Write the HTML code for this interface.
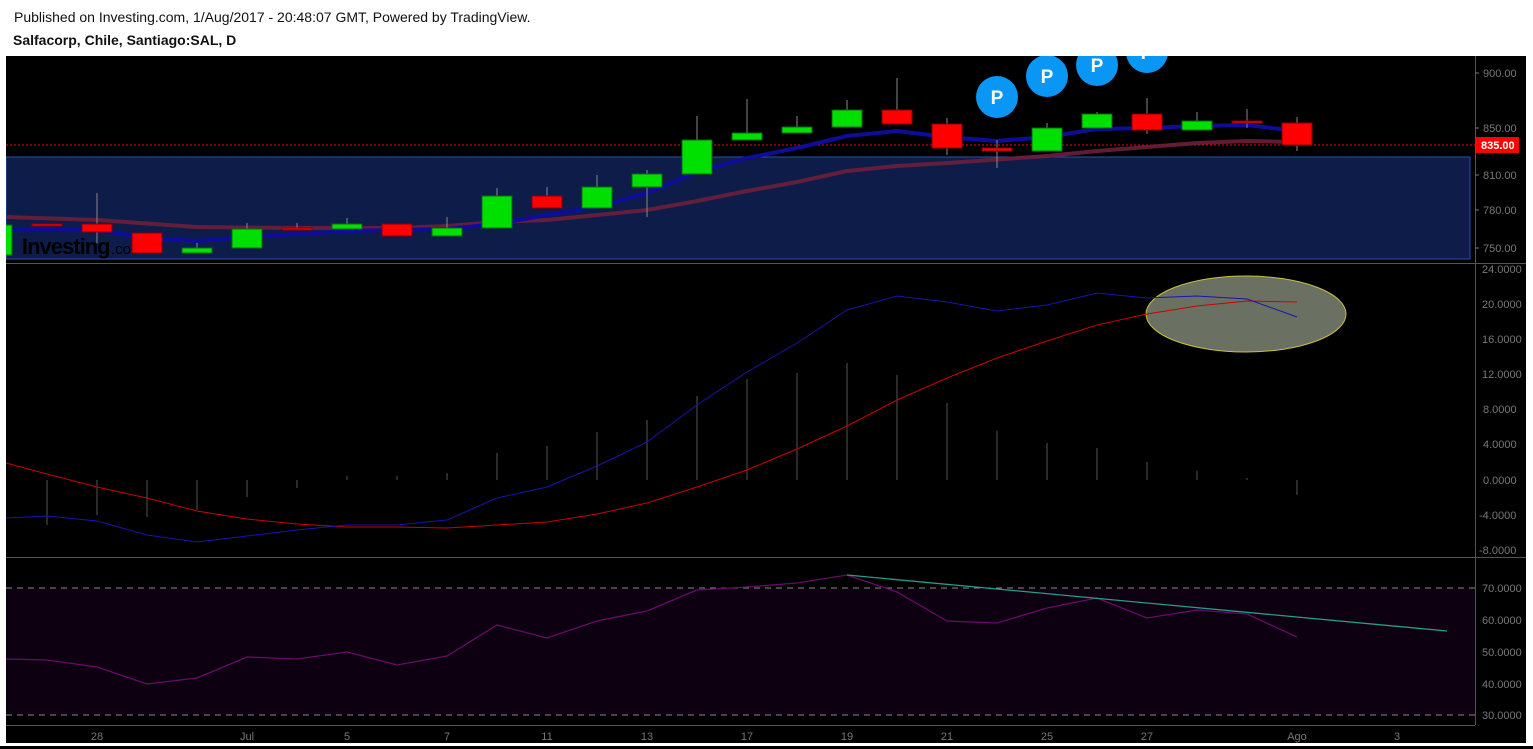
<!DOCTYPE html>
<html><head><style>
html,body{margin:0;padding:0;background:#fff;width:1533px;height:749px;overflow:hidden;font-family:"Liberation Sans",Arial,sans-serif}
.t1{position:absolute;left:14px;top:9px;font-size:14px;color:#111}
.t2{position:absolute;left:13px;top:32px;font-size:14px;font-weight:bold;color:#111}
svg{position:absolute;left:0;top:0}
</style></head><body>
<div class="t1">Published on Investing.com, 1/Aug/2017 - 20:48:07 GMT, Powered by TradingView.</div>
<div class="t2">Salfacorp, Chile, Santiago:SAL, D</div>
<svg width="1533" height="749" viewBox="0 0 1533 749" font-family="Liberation Sans, Arial, sans-serif">
<defs><clipPath id="c1"><rect x="6" y="56" width="1469" height="207"/></clipPath></defs>
<rect x="6" y="56" width="1520" height="687" fill="#000"/>
<rect x="0" y="746" width="1533" height="3" fill="#000"/>
<!-- panel 1 -->
<g clip-path="url(#c1)">
<rect x="6" y="157" width="1464" height="102" fill="#0e1c4a" stroke="#2a4fb0" stroke-width="1"/>
<line x1="6" y1="145" x2="1475" y2="145" stroke="#f00" stroke-dasharray="2,2"/>
<text x="22" y="254" font-size="22" font-weight="bold" fill="#000" letter-spacing="-1">Investing</text><text x="111" y="254" font-size="15" fill="#000">.com</text>
<polyline fill="none" stroke="#6b1f3a" stroke-width="4" opacity="0.9" points="7,217 97,220 197,227 297,228 397,228 447,226 497,222 547,220 647,210 697,201 747,191 797,182 847,171 897,166 947,163 1047,156 1097,151 1147,147 1197,143 1247,141 1297,142"/>
<polyline fill="none" stroke="#0d0d9a" stroke-width="4" points="7,230 47,229 97,230 147,238 197,241 247,237 297,234 347,231 397,230 447,229 497,224 547,215 597,207 647,193 697,172 747,158 797,148 847,136 897,131 947,137 997,141 1047,137 1097,129 1147,128 1197,126 1247,125 1297,131"/>
<g stroke="#888" stroke-width="1">
<line x1="97" y1="193" x2="97" y2="243"/><line x1="197" y1="243" x2="197" y2="250"/><line x1="247" y1="223" x2="247" y2="230"/><line x1="297" y1="223" x2="297" y2="230"/><line x1="347" y1="218" x2="347" y2="225"/><line x1="447" y1="217" x2="447" y2="230"/><line x1="497" y1="188" x2="497" y2="198"/><line x1="547" y1="187" x2="547" y2="198"/><line x1="597" y1="175" x2="597" y2="188"/><line x1="647" y1="170" x2="647" y2="217"/><line x1="697" y1="116" x2="697" y2="142"/><line x1="747" y1="99" x2="747" y2="134"/><line x1="797" y1="116" x2="797" y2="128"/><line x1="847" y1="100" x2="847" y2="112"/><line x1="897" y1="78" x2="897" y2="112"/><line x1="947" y1="118" x2="947" y2="155"/><line x1="997" y1="140" x2="997" y2="168"/><line x1="1047" y1="123" x2="1047" y2="130"/><line x1="1097" y1="112" x2="1097" y2="116"/><line x1="1147" y1="98" x2="1147" y2="134"/><line x1="1197" y1="112" x2="1197" y2="122"/><line x1="1247" y1="109" x2="1247" y2="128"/><line x1="1297" y1="117" x2="1297" y2="151"/>
</g>
<g stroke="#800" stroke-width="1" fill="#f00">
<rect x="32" y="224" width="30" height="2"/><rect x="82" y="224" width="30" height="8"/><rect x="132" y="233" width="30" height="20"/><rect x="282" y="228" width="30" height="2"/><rect x="382" y="224" width="30" height="12"/><rect x="532" y="196" width="30" height="12"/><rect x="882" y="110" width="30" height="14"/><rect x="932" y="124" width="30" height="24"/><rect x="982" y="148" width="30" height="3"/><rect x="1132" y="114" width="30" height="16"/><rect x="1232" y="121" width="30" height="2"/><rect x="1282" y="123" width="30" height="22"/>
</g>
<g stroke="#0a6a0a" stroke-width="1" fill="#00e000">
<rect x="-8" y="225" width="20" height="30"/><rect x="182" y="248" width="30" height="5"/><rect x="232" y="229" width="30" height="19"/><rect x="332" y="224" width="30" height="5"/><rect x="432" y="228" width="30" height="8"/><rect x="482" y="196" width="30" height="32"/><rect x="582" y="187" width="30" height="21"/><rect x="632" y="174" width="30" height="13"/><rect x="682" y="140" width="30" height="34"/><rect x="732" y="133" width="30" height="7"/><rect x="782" y="127" width="30" height="6"/><rect x="832" y="110" width="30" height="17"/><rect x="1032" y="128" width="30" height="23"/><rect x="1082" y="114" width="30" height="14"/><rect x="1182" y="121" width="30" height="9"/>
</g>
<g fill="#0a96f5"><circle cx="997" cy="97" r="21"/><circle cx="1047" cy="76" r="21"/><circle cx="1097" cy="65" r="21"/><circle cx="1147" cy="52" r="21"/></g>
<g fill="#fff" font-size="19" font-weight="bold" text-anchor="middle"><text x="997" y="104">P</text><text x="1047" y="83">P</text><text x="1097" y="72">P</text><text x="1147" y="59">P</text></g>
</g>
<rect x="900" y="44" width="400" height="12" fill="#fff"/>
<!-- separators -->
<line x1="6" y1="263.5" x2="1526" y2="263.5" stroke="#555"/>
<line x1="6" y1="557.5" x2="1526" y2="557.5" stroke="#555"/>
<line x1="6" y1="725.5" x2="1475" y2="725.5" stroke="#555"/>
<line x1="1475.5" y1="56" x2="1475.5" y2="725" stroke="#555"/>
<!-- axis labels -->
<g fill="#777" font-size="11">
<text x="1483" y="77">900.00</text><text x="1483" y="132">850.00</text><text x="1483" y="179">810.00</text><text x="1483" y="214">780.00</text><text x="1483" y="252">750.00</text>
<text x="1482" y="273">24.0000</text><text x="1482" y="308">20.0000</text><text x="1482" y="343">16.0000</text><text x="1482" y="378">12.0000</text><text x="1483" y="413">8.0000</text><text x="1483" y="448">4.0000</text><text x="1483" y="484">0.0000</text><text x="1479" y="519">-4.0000</text><text x="1479" y="554">-8.0000</text>
<text x="1482" y="592">70.0000</text><text x="1482" y="624">60.0000</text><text x="1482" y="656">50.0000</text><text x="1482" y="688">40.0000</text><text x="1482" y="719">30.0000</text>
</g>
<g stroke="#777"><line x1="1475" y1="73" x2="1479" y2="73"/><line x1="1475" y1="128" x2="1479" y2="128"/><line x1="1475" y1="175" x2="1479" y2="175"/><line x1="1475" y1="210" x2="1479" y2="210"/><line x1="1475" y1="248" x2="1479" y2="248"/></g>
<rect x="1476" y="137" width="43" height="16" fill="#f00"/>
<text x="1481" y="149" fill="#fff" font-size="11" font-weight="bold">835.00</text>
<!-- panel 2 -->
<g stroke="#555" stroke-width="1">
<line x1="47" y1="480" x2="47" y2="525"/><line x1="97" y1="480" x2="97" y2="515"/><line x1="147" y1="480" x2="147" y2="517"/><line x1="197" y1="480" x2="197" y2="510"/><line x1="247" y1="480" x2="247" y2="497"/><line x1="297" y1="480" x2="297" y2="488"/><line x1="347" y1="480" x2="347" y2="476"/><line x1="397" y1="480" x2="397" y2="476"/><line x1="447" y1="480" x2="447" y2="473"/><line x1="497" y1="480" x2="497" y2="453"/><line x1="547" y1="480" x2="547" y2="446"/><line x1="597" y1="480" x2="597" y2="432"/><line x1="647" y1="480" x2="647" y2="420"/><line x1="697" y1="480" x2="697" y2="396"/><line x1="747" y1="480" x2="747" y2="379"/><line x1="797" y1="480" x2="797" y2="373"/><line x1="847" y1="480" x2="847" y2="363"/><line x1="897" y1="480" x2="897" y2="375"/><line x1="947" y1="480" x2="947" y2="403"/><line x1="997" y1="480" x2="997" y2="431"/><line x1="1047" y1="480" x2="1047" y2="443"/><line x1="1097" y1="480" x2="1097" y2="448"/><line x1="1147" y1="480" x2="1147" y2="462"/><line x1="1197" y1="480" x2="1197" y2="471"/><line x1="1247" y1="480" x2="1247" y2="478"/><line x1="1297" y1="480" x2="1297" y2="495"/>
</g>
<ellipse cx="1246" cy="314" rx="100" ry="38" fill="#6b7162" stroke="#c8c040" stroke-width="1"/>
<polyline fill="none" stroke="#c00" stroke-width="1" points="6,463 47,474 97,487 147,498 197,511 247,519 297,524 347,527 397,527 447,528 497,525 547,522 597,514 647,503 697,487 747,470 797,449 847,426 897,400 947,378 997,358 1047,341 1097,325 1147,314 1197,306 1247,301 1297,302"/>
<polyline fill="none" stroke="#1515b0" stroke-width="1" points="6,518 47,516 97,521 147,535 197,542 247,536 297,530 347,525 397,525 447,520 497,498 547,487 597,466 647,442 697,405 747,372 797,343 847,310 897,296 947,302 997,311 1047,305 1097,293 1147,298 1197,296 1247,299 1297,317"/>
<!-- panel 3 -->
<rect x="6" y="588" width="1469" height="127" fill="#0d0010"/>
<line x1="6" y1="588" x2="1475" y2="588" stroke="#888" stroke-dasharray="6,5"/>
<line x1="6" y1="715" x2="1475" y2="715" stroke="#888" stroke-dasharray="6,5"/>
<polyline fill="none" stroke="#6a0a6a" stroke-width="1.3" points="6,659 47,660 97,667 147,684 197,678 247,657 297,659 347,652 397,665 447,656 497,625 547,638 597,621 647,611 697,590 747,587 797,583 847,575 897,592 947,621 997,623 1047,608 1097,598 1147,618 1197,610 1247,614 1297,637"/>
<line x1="847" y1="575" x2="1447" y2="631" stroke="#2a9a8a" stroke-width="1.3"/>
<!-- time axis -->
<g fill="#777" font-size="11" text-anchor="middle">
<text x="97" y="740">28</text><text x="247" y="740">Jul</text><text x="347" y="740">5</text><text x="447" y="740">7</text><text x="547" y="740">11</text><text x="647" y="740">13</text><text x="747" y="740">17</text><text x="847" y="740">19</text><text x="947" y="740">21</text><text x="1047" y="740">25</text><text x="1147" y="740">27</text><text x="1297" y="740">Ago</text><text x="1397" y="740">3</text>
</g>
</svg>
</body></html>
